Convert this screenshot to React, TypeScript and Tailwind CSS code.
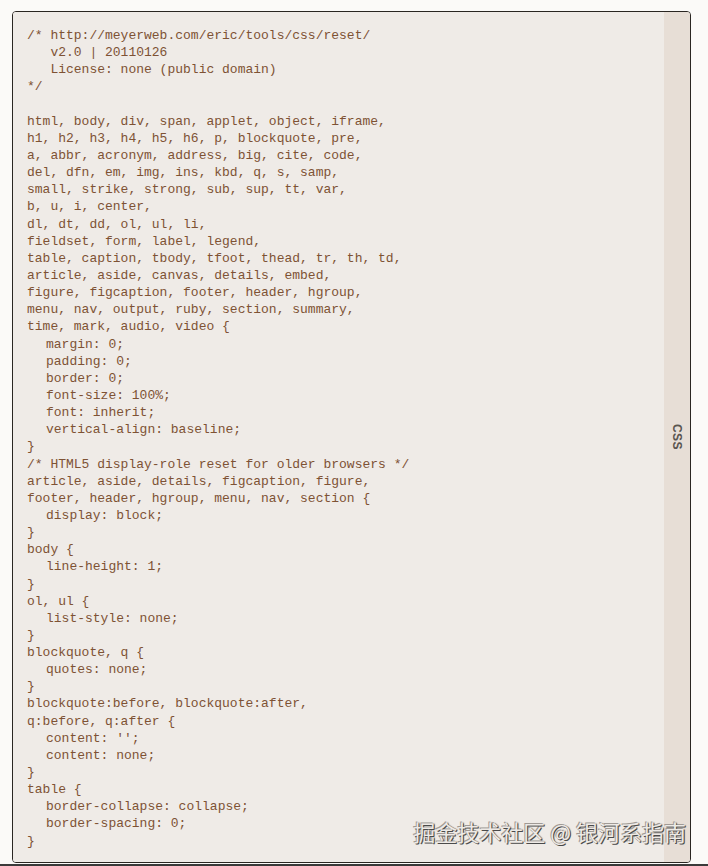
const lines: [number, string][] = [
  [0, '/* http://meyerweb.com/eric/tools/css/reset/'],
  [0, '   v2.0 | 20110126'],
  [0, '   License: none (public domain)'],
  [0, '*/'],
  [0, ''],
  [0, 'html, body, div, span, applet, object, iframe,'],
  [0, 'h1, h2, h3, h4, h5, h6, p, blockquote, pre,'],
  [0, 'a, abbr, acronym, address, big, cite, code,'],
  [0, 'del, dfn, em, img, ins, kbd, q, s, samp,'],
  [0, 'small, strike, strong, sub, sup, tt, var,'],
  [0, 'b, u, i, center,'],
  [0, 'dl, dt, dd, ol, ul, li,'],
  [0, 'fieldset, form, label, legend,'],
  [0, 'table, caption, tbody, tfoot, thead, tr, th, td,'],
  [0, 'article, aside, canvas, details, embed,'],
  [0, 'figure, figcaption, footer, header, hgroup,'],
  [0, 'menu, nav, output, ruby, section, summary,'],
  [0, 'time, mark, audio, video {'],
  [1, 'margin: 0;'],
  [1, 'padding: 0;'],
  [1, 'border: 0;'],
  [1, 'font-size: 100%;'],
  [1, 'font: inherit;'],
  [1, 'vertical-align: baseline;'],
  [0, '}'],
  [0, '/* HTML5 display-role reset for older browsers */'],
  [0, 'article, aside, details, figcaption, figure,'],
  [0, 'footer, header, hgroup, menu, nav, section {'],
  [1, 'display: block;'],
  [0, '}'],
  [0, 'body {'],
  [1, 'line-height: 1;'],
  [0, '}'],
  [0, 'ol, ul {'],
  [1, 'list-style: none;'],
  [0, '}'],
  [0, 'blockquote, q {'],
  [1, 'quotes: none;'],
  [0, '}'],
  [0, 'blockquote:before, blockquote:after,'],
  [0, 'q:before, q:after {'],
  [1, "content: '';"],
  [1, 'content: none;'],
  [0, '}'],
  [0, 'table {'],
  [1, 'border-collapse: collapse;'],
  [1, 'border-spacing: 0;'],
  [0, '}'],
]

export default function App() {
  return (
    <div className="w-[708px] h-[866px] bg-[#fbfaf8] pl-3 pt-[11px] relative overflow-hidden">
      <div className="relative flex w-[679px] h-[852px] border border-[#2a2622] rounded-[4px] overflow-hidden">
        <pre className="flex-1 bg-[#efebe7] pl-[14px] pt-[15px] font-['Liberation_Mono',monospace] text-[13px] leading-[17.15px] text-[#7e5234] whitespace-pre">
          {lines.map(([indent, text], i) => (
            <div key={i} className={indent ? 'pl-[19px] h-[17.15px]' : 'h-[17.15px]'}>
              {text}
            </div>
          ))}
        </pre>
        <div className="w-[26px] bg-[#e7ded6] flex items-center justify-center">
          <span className="rotate-90 font-['Liberation_Sans',sans-serif] text-[12px] font-semibold text-[#5a5550] tracking-[0.5px]">
            CSS
          </span>
        </div>
        <div className="absolute right-[4px] bottom-[20px] font-['Noto_Sans_CJK_SC','Noto_Sans',sans-serif] text-[22px] leading-none text-[#eeeae6] [text-shadow:1px_1px_0_#4a4a4a,-1px_-1px_0_#a09a95,1px_0_1px_#777]">
          掘金技术社区 @ 银河系指南
        </div>
      </div>
      <div className="absolute left-0 right-0 bottom-0 h-[2px] bg-[#3a3a3a]" />
    </div>
  )
}
